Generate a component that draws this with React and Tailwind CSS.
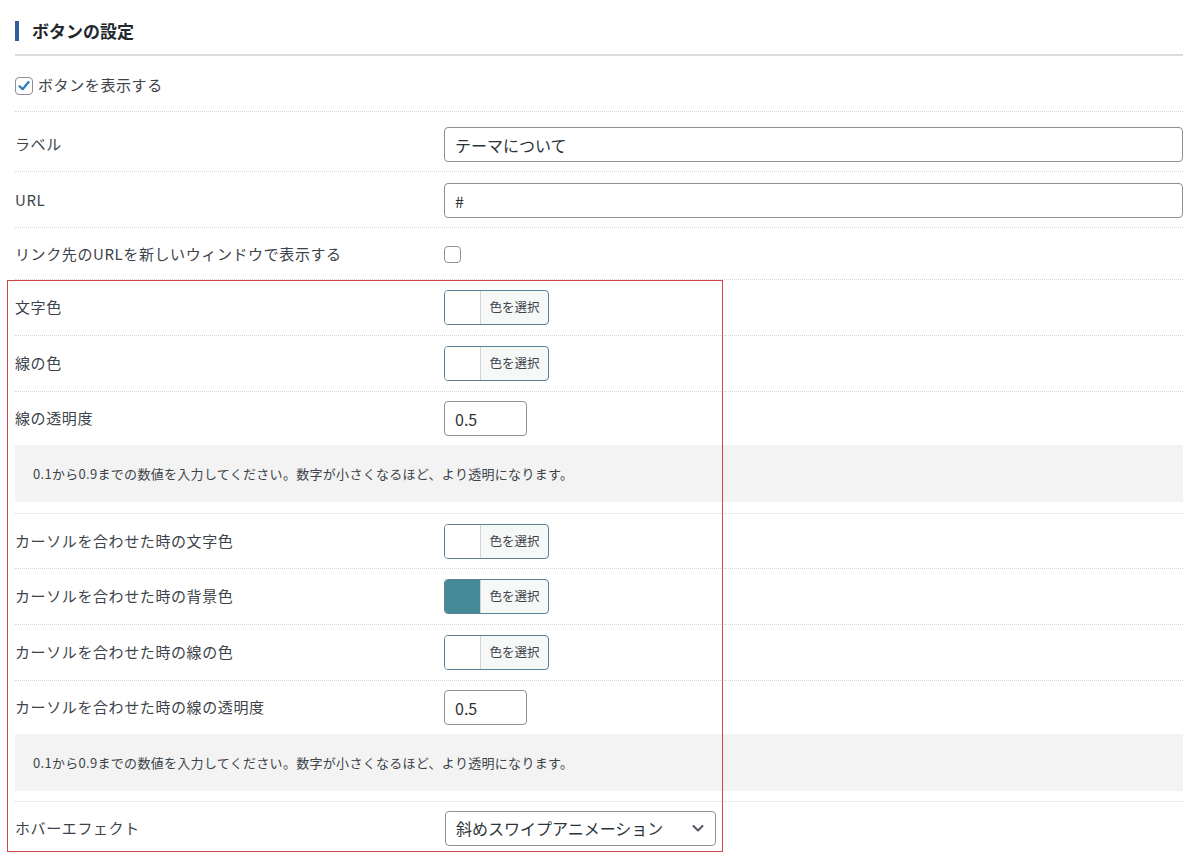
const font = { fontFamily: '"Noto Sans CJK JP", "Noto Sans", sans-serif' };

const ColorButton = ({ color }) => (
  <div className="flex h-[35px] w-[105px] overflow-hidden rounded-[4px] border border-[#5a7f97] bg-[#f6f7f7]">
    <span
      className={`w-[36px] border-r border-[#d0d4d8] ${color ? "bg-[#458a96]" : "bg-white"}`}
    />
    <span className="flex flex-1 items-center justify-center text-[12.5px] text-[#3c434a]">
      色を選択
    </span>
  </div>
);

const NumberInput = () => (
  <div className="flex h-[35px] w-[83px] items-center rounded-[4px] border border-[#8c8f94] bg-white px-[10px] text-[16px] text-[#2c3338]">
    0.5
  </div>
);

const Row = ({ label, h, children }) => (
  <div
    className={`flex items-center border-b border-dotted border-[#d6d6d6] ${h}`}
  >
    <div className="w-[429px] text-[15px] tracking-[0.6px] text-[#3c434a]">{label}</div>
    <div className="flex flex-1 items-center">{children}</div>
  </div>
);

const Note = () => (
  <div className="flex h-[57px] items-center bg-[#f3f3f3] pl-[18px] text-[13px] tracking-[0.3px] text-[#3c434a]">
    0.1から0.9までの数値を入力してください。数字が小さくなるほど、より透明になります。
  </div>
);

export default function App() {
  return (
    <div className="min-h-[857px] w-[1200px] bg-white pl-[15px] pr-[17px]" style={font}>
      {/* Title */}
      <div className="flex h-[56px] items-center gap-[13px] border-b-2 border-[#dcdcdc] pt-[8px]">
        <span className="h-[20px] w-[4px] bg-[#2f5f9a]" />
        <h2 className="text-[17px] font-bold text-[#23282d]">ボタンの設定</h2>
      </div>

      {/* Show button */}
      <div className="flex h-[56px] items-center gap-[5px] border-b border-dotted border-[#d6d6d6] pt-[4px]">
        <span className="flex h-[18px] w-[18px] items-center justify-center rounded-[4px] border border-[#8c8f94] bg-white">
          <svg width="14" height="14" viewBox="0 0 14 14">
            <path d="M2.5 7.2 L5.6 10.2 L11.6 3" fill="none" stroke="#2c7ab8" strokeWidth="2.2" strokeLinecap="round" strokeLinejoin="round" />
          </svg>
        </span>
        <span className="text-[15px] tracking-[0.6px] text-[#3c434a]">ボタンを表示する</span>
      </div>

      <Row label="ラベル" h="h-[60px] pt-[6px]">
        <div className="flex h-[35px] flex-1 items-center rounded-[4px] border border-[#8c8f94] px-[10px] text-[16px] text-[#2c3338]">
          テーマについて
        </div>
      </Row>
      <Row label="URL" h="h-[56px] pt-[2px]">
        <div className="flex h-[35px] flex-1 items-center rounded-[4px] border border-[#8c8f94] px-[10px] text-[16px] text-[#2c3338]">
          #
        </div>
      </Row>
      <Row label="リンク先のURLを新しいウィンドウで表示する" h="h-[52px] pt-[2px]">
        <span className="h-[17px] w-[17px] rounded-[4px] border border-[#8c8f94] bg-white" />
      </Row>

      <div className="relative">
        <Row label="文字色" h="h-[56px]">
          <ColorButton />
        </Row>
        <Row label="線の色" h="h-[56px]">
          <ColorButton />
        </Row>
        <div className="border-b border-dotted border-[#d6d6d6] pb-[11px]">
          <div className="flex h-[53px] items-center">
            <div className="w-[429px] text-[15px] tracking-[0.6px] text-[#3c434a]">線の透明度</div>
            <NumberInput />
          </div>
          <Note />
        </div>
        <Row label="カーソルを合わせた時の文字色" h="h-[55px]">
          <ColorButton />
        </Row>
        <Row label="カーソルを合わせた時の背景色" h="h-[56px]">
          <ColorButton color />
        </Row>
        <Row label="カーソルを合わせた時の線の色" h="h-[56px]">
          <ColorButton />
        </Row>
        <div className="border-b border-dotted border-[#d6d6d6] pb-[10px]">
          <div className="flex h-[53px] items-center">
            <div className="w-[429px] text-[15px] tracking-[0.6px] text-[#3c434a]">カーソルを合わせた時の線の透明度</div>
            <NumberInput />
          </div>
          <Note />
        </div>
        <div className="flex h-[50px] items-center pt-[2px]">
          <div className="w-[430px] text-[15px] tracking-[0.6px] text-[#3c434a]">ホバーエフェクト</div>
          <div className="flex h-[35px] w-[271px] items-center justify-between rounded-[4px] border border-[#8c8f94] pl-[10px] pr-[10px] text-[16px] text-[#2c3338]">
            <span>斜めスワイプアニメーション</span>
            <svg width="14" height="14" viewBox="0 0 14 14">
              <path d="M2.5 5 L7 9.5 L11.5 5" fill="none" stroke="#50575e" strokeWidth="2" strokeLinecap="round" strokeLinejoin="round" />
            </svg>
          </div>
        </div>

        {/* annotation frame */}
        <div className="pointer-events-none absolute left-[-8px] top-0 h-[572px] w-[716px] border-[1.5px] border-[#d64545]" />
      </div>
    </div>
  );
}
